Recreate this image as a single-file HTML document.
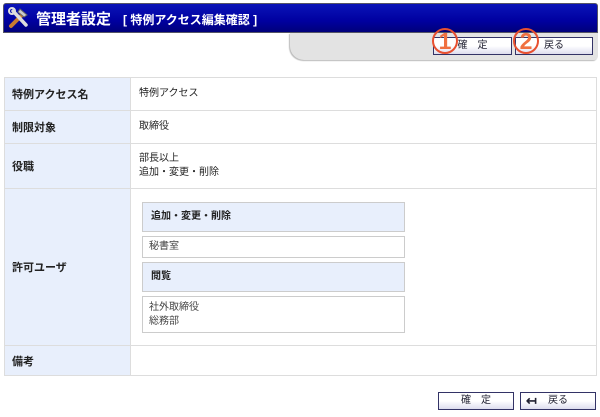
<!DOCTYPE html>
<html><head><meta charset="utf-8"><style>
*{margin:0;padding:0;box-sizing:border-box}
body{width:600px;height:417px;background:#fff;font-family:"Liberation Sans","Noto Sans CJK JP",sans-serif;position:relative;overflow:hidden;font-size:10px;color:#222}
.hdr{position:absolute;left:3px;top:3px;width:595px;height:30px;background:linear-gradient(#0a14b8,#0000a0 60%,#00007a);border-radius:3px 3px 0 0;border:1px solid #556}
.hdr .t{position:absolute;left:32px;top:4px;color:#fff;font-size:15px;font-weight:bold}
.hdr .t span{font-size:12px;margin-left:12px}
.gray{position:absolute;left:290px;top:33px;width:308px;height:27px;background:#e3e3e3;border-radius:0 0 4px 14px;box-shadow:-1px 1px 1px #bbb}
.btn{position:absolute;height:18px;border:1px solid #333366;background:linear-gradient(#fff,#fff 50%,#dde);font-size:10px;color:#223;text-align:center;line-height:16px}
.c{position:absolute;width:26px;height:26px;border:2px solid #e85030;border-radius:50%;color:#f07040;font-weight:bold;font-size:23px;text-align:center;line-height:22px}
table{position:absolute;left:4px;top:77px;width:593px;border-collapse:collapse}
td{border:1px solid #ddd;font-size:10px;vertical-align:middle}
td.l{width:126px;background:#e8effc;font-weight:bold;padding-left:7px;font-size:11px}
td.v{padding-left:8px;line-height:14px}
.ib{margin-left:4px;width:263px;border:1px solid #ccc;padding-left:6px;line-height:14px;color:#444}
.ih{background:#e8effc;font-weight:bold;color:#222;height:30px;line-height:28px;padding-left:8px}
</style></head><body>
<div class="hdr"><svg style="position:absolute;left:3px;top:2px" width="24" height="24" viewBox="0 0 24 24"><path d="M4 20 L16 8" stroke="#c87a30" stroke-width="4" stroke-linecap="round"/><path d="M13 3 L20 9 L17 11 L11 6Z" fill="#ccc" stroke="#666"/><path d="M6 5 L19 19" stroke="#ddd" stroke-width="3.5" stroke-linecap="round"/><circle cx="5" cy="5" r="3" fill="none" stroke="#ddd" stroke-width="2"/></svg><div class="t">管理者設定<span>[ 特例アクセス編集確認 ]</span></div></div>
<div class="gray"></div>
<div class="btn" style="left:433px;top:37px;width:79px">確　定</div>
<div class="btn" style="left:515px;top:37px;width:78px">戻る</div>
<div class="c" style="left:432px;top:28px">1</div>
<div class="c" style="left:513px;top:28px">2</div>
<table>
<tr style="height:33px"><td class="l">特例アクセス名</td><td class="v">特例アクセス</td></tr>
<tr style="height:33px"><td class="l">制限対象</td><td class="v">取締役</td></tr>
<tr style="height:45px"><td class="l">役職</td><td class="v">部長以上<br>追加・変更・削除</td></tr>
<tr style="height:157px"><td class="l">許可ユーザ</td><td class="v" style="padding-left:7px">
<div class="ib ih">追加・変更・削除</div>
<div class="ib" style="margin-top:4px;height:22px;line-height:20px">秘書室</div>
<div class="ib ih" style="margin-top:4px">閲覧</div>
<div class="ib" style="margin-top:4px;height:37px;padding-top:4px">社外取締役<br>総務部</div>
</td></tr>
<tr style="height:30px"><td class="l">備考</td><td class="v"></td></tr>
</table>
<div class="btn" style="left:438px;top:392px;width:76px">確　定</div>
<div class="btn" style="left:520px;top:392px;width:76px"><span style="position:absolute;left:5px;font-weight:bold;font-size:13px;line-height:15px">↤</span>戻る</div>
</body></html>
